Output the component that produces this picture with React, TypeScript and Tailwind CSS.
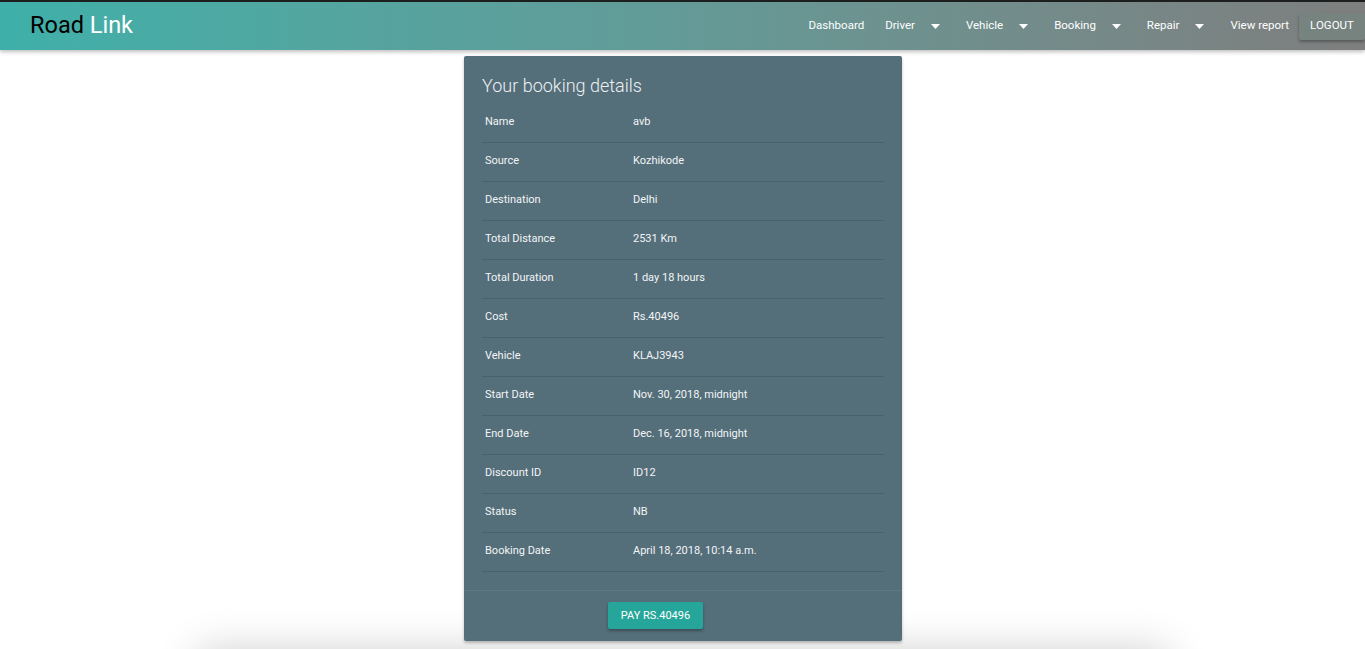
import React from 'react';

const rows: [string, string][] = [
  ['Name', 'avb'],
  ['Source', 'Kozhikode'],
  ['Destination', 'Delhi'],
  ['Total Distance', '2531 Km'],
  ['Total Duration', '1 day 18 hours'],
  ['Cost', 'Rs.40496'],
  ['Vehicle', 'KLAJ3943'],
  ['Start Date', 'Nov. 30, 2018, midnight'],
  ['End Date', 'Dec. 16, 2018, midnight'],
  ['Discount ID', 'ID12'],
  ['Status', 'NB'],
  ['Booking Date', 'April 18, 2018, 10:14 a.m.'],
];

function Caret() {
  return (
    <svg width="9" height="5" viewBox="0 0 9 5" className="ml-4">
      <path d="M0 0 L9 0 L4.5 5 Z" fill="#ffffff" />
    </svg>
  );
}

function NavItem({ label, dropdown }: { label: string; dropdown?: boolean }) {
  return (
    <a className={`flex items-center h-full pl-[11px] ${dropdown ? 'pr-[15px]' : 'pr-[10px]'} text-white text-[11.5px] cursor-pointer`}>
      {label}
      {dropdown && <Caret />}
    </a>
  );
}

export default function App() {
  return (
    <div className="min-h-screen bg-white overflow-hidden" style={{ fontFamily: 'Roboto, "Noto Sans", sans-serif' }}>
      {/* Navbar */}
      <nav className="relative z-10 h-[50px] border-t-2 border-[#1d1f1f] bg-linear-to-r from-[#3eb0a9] via-[#639a97] to-[#7e7e7e] shadow-[0_2px_4px_rgba(0,0,0,0.25)] flex items-center">
        <div className="pl-[30px] text-[23.5px] leading-none pb-[1px]">
          <span className="text-black">Road</span> <span className="text-white">Link</span>
        </div>
        <div className="ml-auto flex items-center h-full">
          <NavItem label="Dashboard" />
          <NavItem label="Driver" dropdown />
          <NavItem label="Vehicle" dropdown />
          <NavItem label="Booking" dropdown />
          <NavItem label="Repair" dropdown />
          <NavItem label="View report" />
          <button className="h-[27px] w-[66px] bg-[#77837f] text-white text-[11.5px] uppercase shadow-[0_2px_3px_rgba(0,0,0,0.3)] rounded-[2px]">
            Logout
          </button>
        </div>
      </nav>

      {/* Card */}
      <div className="relative z-10 mt-[6px] w-[438px] ml-[464px] bg-[#546e7a] rounded-[2px] shadow-[0_2px_3px_rgba(0,0,0,0.25)]">
        <div className="px-[18px] pt-[13px]">
          <h2 className="text-[18px] leading-[34px] font-light text-[#eef1f3]">Your booking details</h2>
          <table className="w-full border-collapse text-[11px] text-[#f3f5f6]">
            <tbody>
              {rows.map(([k, v]) => (
                <tr key={k} className="border-b border-[#4a616b] h-[39px]">
                  <td className="pl-[3px] w-[151px] align-middle">{k}</td>
                  <td className="align-middle">{v}</td>
                </tr>
              ))}
            </tbody>
          </table>
        </div>
        <div className="mt-[18px] border-t border-[#5f7983] pt-[11px] pb-[12px]">
          <button className="ml-[144px] h-[27px] w-[95px] bg-[#26a69a] text-white text-[11px] uppercase rounded-[2px] shadow-[0_2px_3px_rgba(0,0,0,0.3)]">
            Pay Rs.40496
          </button>
        </div>
      </div>

      {/* card below, mostly off screen */}
      <div className="mx-auto mt-[10px] w-[970px] h-[200px] bg-white shadow-[0_0_40px_rgba(0,0,0,0.2)]" />
    </div>
  );
}
